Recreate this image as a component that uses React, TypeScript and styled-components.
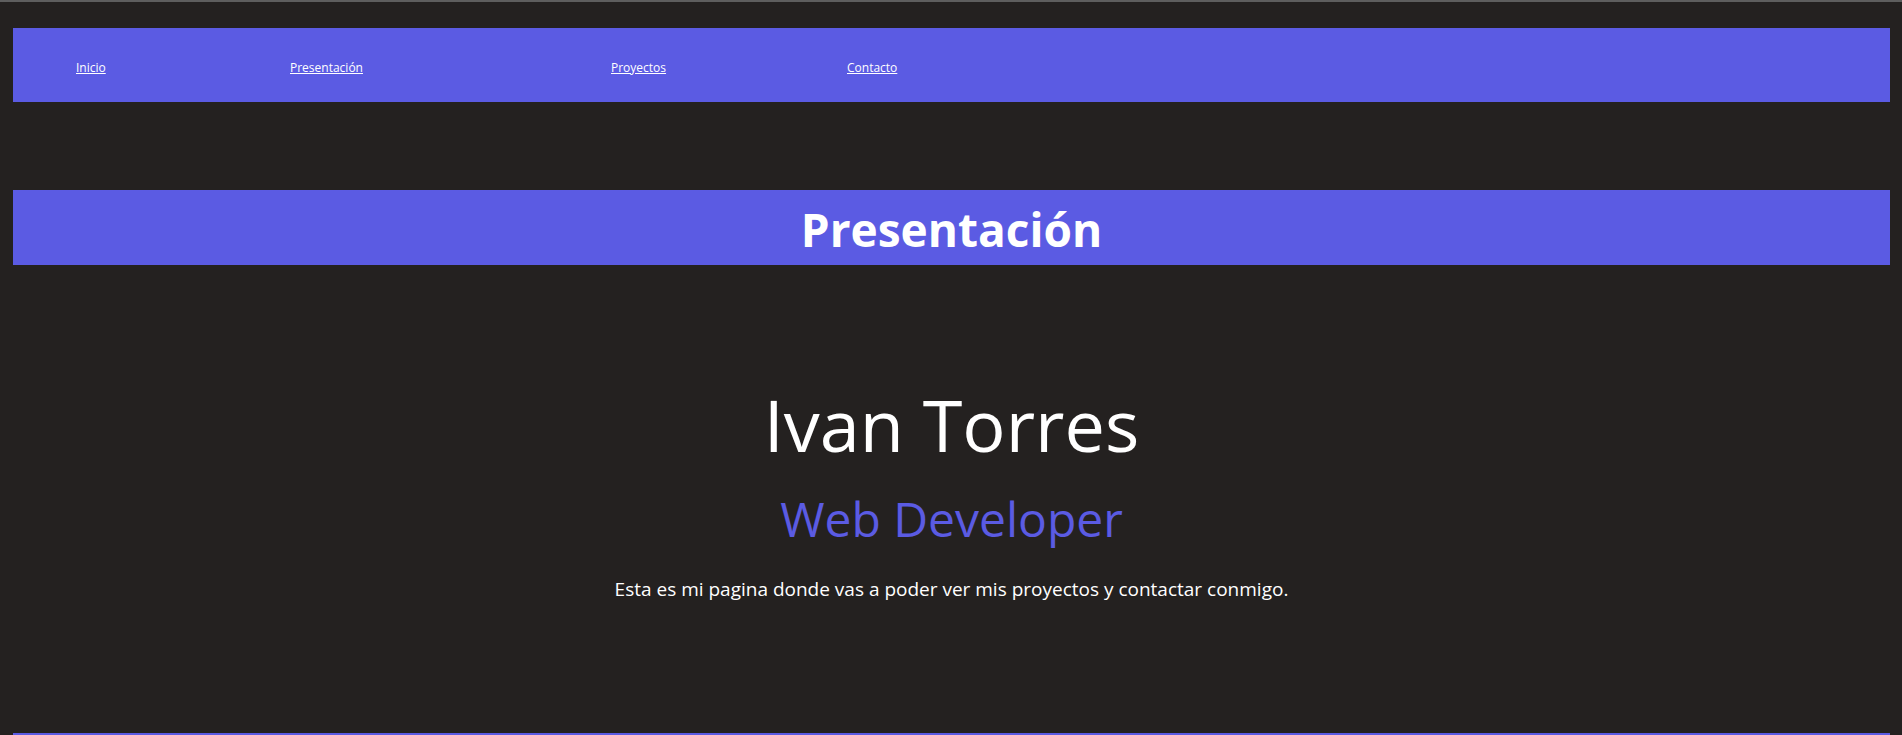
import React from "react";
import styled, { createGlobalStyle } from "styled-components";

const BLUE = "#5b5be3";
const BG = "#242120";

const GlobalStyle = createGlobalStyle`
  html, body {
    margin: 0;
    padding: 0;
    background: ${BG};
  }
  body {
    border-top: 2px solid #5e5e5e;
    font-family: "Open Sans", "Noto Sans", "Liberation Sans", sans-serif;
    color: #ffffff;
  }
`;

const Page = styled.div`
  padding: 26px 12px 0 13px;
`;

const NavBar = styled.nav`
  height: 74px;
  background: ${BLUE};
  display: grid;
  grid-template-columns: 214px 321px 236px auto;
  align-items: center;
  padding: 5px 0 0 63px;
  box-sizing: border-box;
`;

const NavLink = styled.a`
  justify-self: start;
  color: #ffffff;
  font-size: 12px;
  line-height: 16px;
  text-decoration: underline;
  text-underline-offset: 1px;
`;

const TitleBar = styled.header`
  margin-top: 88px;
  height: 75px;
  box-sizing: border-box;
  padding-top: 4px;
  background: ${BLUE};
  text-align: center;
`;

const Title = styled.h2`
  margin: 0;
  font-size: 46px;
  line-height: 71px;
  font-weight: 700;
  color: #ffffff;
`;

const Hero = styled.section`
  display: flex;
  flex-direction: column;
  align-items: center;
  padding: 119px 0 132px;
  text-align: center;
`;

const Name = styled.h1`
  margin: 0;
  font-size: 72px;
  line-height: 80px;
  font-weight: 400;
  color: #ffffff;
`;

const Role = styled.h3`
  margin: 27px 0 0;
  font-size: 48px;
  line-height: 56px;
  font-weight: 400;
  color: ${BLUE};
`;

const Intro = styled.p`
  margin: 30px 0 0;
  font-size: 19px;
  line-height: 24px;
  color: #ffffff;
`;

const NextSection = styled.section`
  height: 75px;
  background: ${BLUE};
`;

const links = ["Inicio", "Presentación", "Proyectos", "Contacto"];

export default function App() {
  return (
    <>
      <GlobalStyle />
      <Page>
        <NavBar>
          {links.map((l) => (
            <NavLink key={l} href="#">
              {l}
            </NavLink>
          ))}
        </NavBar>
        <TitleBar>
          <Title>Presentación</Title>
        </TitleBar>
        <Hero>
          <Name>Ivan Torres</Name>
          <Role>Web Developer</Role>
          <Intro>
            Esta es mi pagina donde vas a poder ver mis proyectos y contactar conmigo.
          </Intro>
        </Hero>
        <NextSection />
      </Page>
    </>
  );
}
